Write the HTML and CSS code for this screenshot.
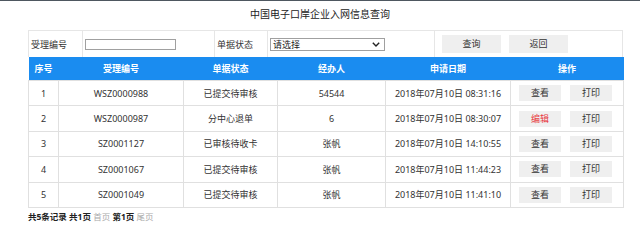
FILE: index.html
```html
<!DOCTYPE html>
<html lang="zh">
<head>
<meta charset="utf-8">
<title>中国电子口岸企业入网信息查询</title>
<link rel="stylesheet" href="styles.css">
</head>
<body>
<div class="topbar"></div>
<h1 class="title">中国电子口岸企业入网信息查询</h1>
<div class="wrap">
  <div class="search">
    <div class="cell s-label">受理编号</div>
    <div class="cell"><input class="s-input" type="text"></div>
    <div class="cell s-label">单据状态</div>
    <div class="cell"><div class="s-select"><span>请选择</span><svg class="chev" viewBox="0 0 8 5" width="8" height="5"><path d="M0.8 0.8 L4 4 L7.2 0.8" fill="none" stroke="#222" stroke-width="1.4"/></svg></div></div>
    <div class="cell c5"><span class="btn sbtn">查询</span><span class="btn sbtn">返回</span></div>
  </div>
  <table class="grid">
    <colgroup>
      <col style="width:30px"><col style="width:125px"><col style="width:94px"><col style="width:108px"><col style="width:125px"><col style="width:113px">
    </colgroup>
    <thead>
      <tr><th>序号</th><th>受理编号</th><th>单据状态</th><th>经办人</th><th>申请日期</th><th>操作</th></tr>
    </thead>
    <tbody>
      <tr><td>1</td><td>WSZ0000988</td><td>已提交待审核</td><td>54544</td><td>2018年07月10日 08:31:16</td><td class="ops"><span class="btn">查看</span><span class="btn">打印</span></td></tr>
      <tr><td>2</td><td>WSZ0000987</td><td>分中心退单</td><td>6</td><td>2018年07月10日 08:30:07</td><td class="ops"><span class="btn red">编辑</span><span class="btn">打印</span></td></tr>
      <tr><td>3</td><td>SZ0001127</td><td>已审核待收卡</td><td>张帆</td><td>2018年07月10日 14:10:55</td><td class="ops"><span class="btn">查看</span><span class="btn">打印</span></td></tr>
      <tr><td>4</td><td>SZ0001067</td><td>已提交待审核</td><td>张帆</td><td>2018年07月10日 11:44:23</td><td class="ops"><span class="btn">查看</span><span class="btn">打印</span></td></tr>
      <tr><td>5</td><td>SZ0001049</td><td>已提交待审核</td><td>张帆</td><td>2018年07月10日 11:41:10</td><td class="ops"><span class="btn">查看</span><span class="btn">打印</span></td></tr>
    </tbody>
  </table>
  <div class="pager">共5条记录 共1页 <span class="dim">首页</span> 第1页 <span class="dim">尾页</span></div>
</div>
</body>
</html>
```
FILE: styles.css
```css
html, body {
  margin: 0;
  padding: 0;
  background: #fff;
}
body {
  font-family: "Noto Sans", "Noto Sans CJK SC", sans-serif;
  color: #333;
  font-size: 9px;
}
.topbar {
  height: 1px;
  background: #4e5760;
}
.title {
  margin: 0;
  height: 29px;
  line-height: 27px;
  text-align: center;
  font-size: 10px;
  font-weight: normal;
  color: #222;
}
.wrap {
  margin-left: 28px;
  width: 595px;
}
.search {
  display: grid;
  grid-template-columns: 54px 132px 53px 167px 1fr;
  height: 27px;
  box-sizing: border-box;
  border-top: 1px solid #e6e6e6;
  border-right: 1px solid #e6e6e6;
}
.search .cell {
  border-left: 1px solid #e6e6e6;
  display: flex;
  align-items: center;
}
.s-label {
  padding-left: 2px;
  color: #333;
}
.s-input {
  display: block;
  box-sizing: border-box;
  margin-left: 2px;
  width: 91px;
  height: 11px;
  border: 1px solid #a0a0a0;
  padding: 0;
}
.s-select {
  box-sizing: border-box;
  margin-left: 2px;
  width: 115px;
  height: 13px;
  border: 1px solid #a0a0a0;
  display: flex;
  align-items: center;
  justify-content: space-between;
  padding: 0 4px 0 2px;
  font-size: 9px;
  color: #222;
}
.chev { display: block; }
.c5 {
  padding-left: 7px;
}
.btn {
  display: inline-block;
  width: 42px;
  height: 16px;
  line-height: 16px;
  text-align: center;
  background: #efefef;
  color: #333;
}
.sbtn {
  width: 59px;
  height: 18px;
  line-height: 18px;
  margin-right: 8px;
}
.red { color: #e8383d; }
.grid {
  width: 595px;
  border-collapse: collapse;
  table-layout: fixed;
}
.grid th {
  background: #1a8cf0;
  color: #fff;
  font-weight: bold;
  height: 23px;
  padding: 0;
  text-align: center;
}
.grid td {
  height: 24.4px;
  padding: 0;
  text-align: center;
  border: 1px solid #e0e0e0;
  vertical-align: middle;
}
.grid td.ops {
  text-align: left;
  padding-left: 8px;
}
.grid td.ops .btn + .btn {
  margin-left: 9px;
}
.pager {
  margin-top: 2px;
  font-size: 8.5px;
  color: #222;
  font-weight: bold;
}
.pager .dim {
  color: #aaa;
  font-weight: normal;
}
```
